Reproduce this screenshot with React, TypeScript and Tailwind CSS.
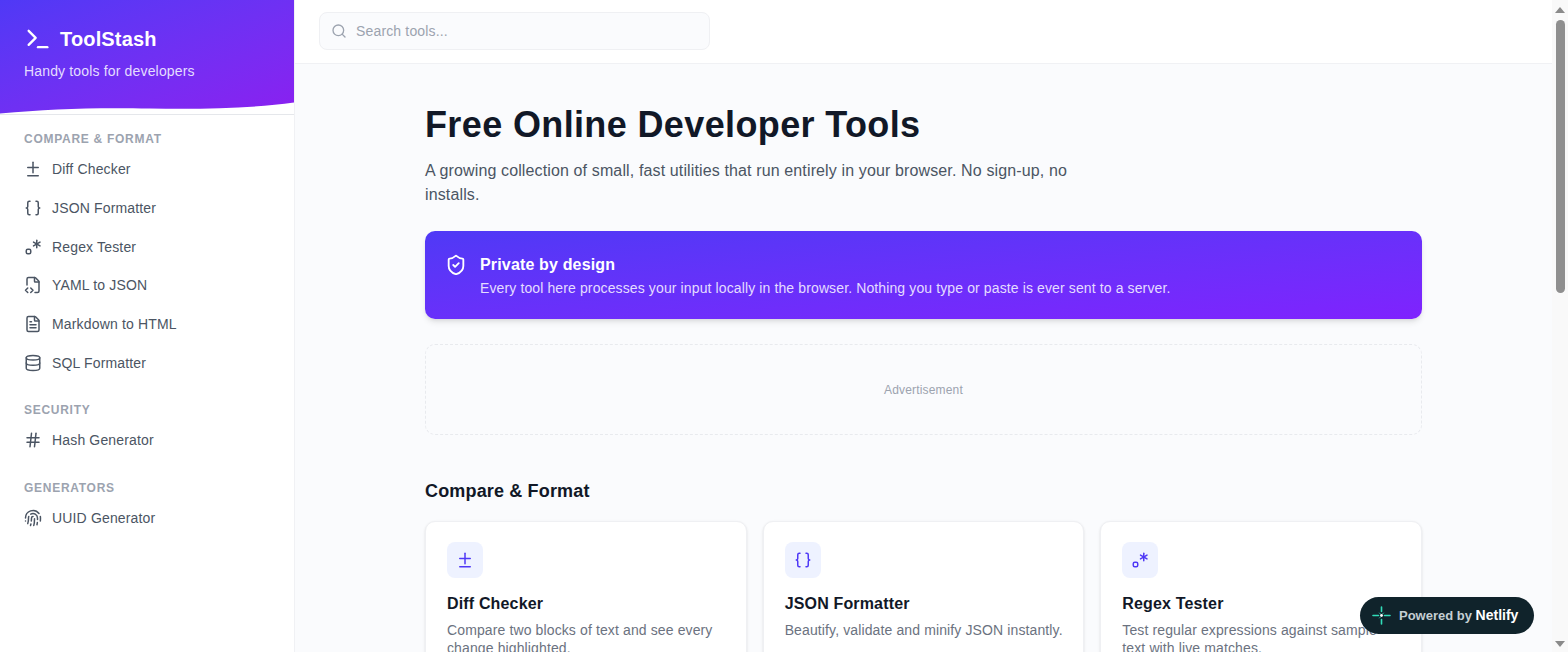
import { Braces, Database, Diff, FileCode2, FileText, Fingerprint, Hash, Regex, Search, ShieldCheck, Terminal } from "lucide-react";
import type { LucideIcon } from "lucide-react";

const font = "font-['Liberation_Sans',Arial,sans-serif]";

const sections: { title: string; items: { label: string; icon: LucideIcon }[] }[] = [
  {
    title: "Compare & Format",
    items: [
      { label: "Diff Checker", icon: Diff },
      { label: "JSON Formatter", icon: Braces },
      { label: "Regex Tester", icon: Regex },
      { label: "YAML to JSON", icon: FileCode2 },
      { label: "Markdown to HTML", icon: FileText },
      { label: "SQL Formatter", icon: Database },
    ],
  },
  { title: "Security", items: [{ label: "Hash Generator", icon: Hash }] },
  { title: "Generators", items: [{ label: "UUID Generator", icon: Fingerprint }] },
];

const cards = [
  { title: "Diff Checker", text: "Compare two blocks of text and see every change highlighted.", icon: Diff },
  { title: "JSON Formatter", text: "Beautify, validate and minify JSON instantly.", icon: Braces },
  { title: "Regex Tester", text: "Test regular expressions against sample text with live matches.", icon: Regex },
];

function Sidebar() {
  return (
    <aside className="w-[295px] shrink-0 h-full bg-white border-r border-[#f0f1f4]">
      <div className="relative h-[115px] border-b border-[#e5e7eb]">
        <div className="h-[114px] px-6 pt-[25px] bg-gradient-to-br from-[#4f39f6] to-[#8a1ff0] text-white">
          <div className="flex items-center gap-2 h-[28px]">
            <Terminal className="w-7 h-7" strokeWidth={2} />
            <span className="text-xl font-bold">ToolStash</span>
          </div>
          <p className="mt-[8px] text-sm leading-5 text-[#e4ddff]">Handy tools for developers</p>
        </div>
        <svg className="absolute left-0 bottom-0 w-full h-[12px]" viewBox="0 0 294 12" preserveAspectRatio="none">
          <path d="M0 11.5C50 7 90 5.5 150 6.5C205 7.5 255 6 294 0.5V12H0Z" fill="#fff" />
        </svg>
      </div>
      <nav className="pt-[16px]">
        {sections.map((s) => (
          <div key={s.title} className="mb-[20px]">
            <h3 className="h-[16px] px-6 text-xs leading-4 font-bold uppercase tracking-[0.72px] text-[#9ca3af]">{s.title}</h3>
            <ul className="mt-[3px]">
              {s.items.map((it) => (
                <li key={it.label} className="h-[38.7px] px-6 flex items-center gap-2.5 text-sm text-[#4b5563]">
                  <it.icon className="w-[18px] h-[18px]" strokeWidth={2} />
                  {it.label}
                </li>
              ))}
            </ul>
          </div>
        ))}
      </nav>
    </aside>
  );
}

function Scrollbar() {
  return (
    <div className="w-4 shrink-0 h-full bg-[#f9f9f9] flex flex-col items-center">
      <div className="h-[20px] flex items-center justify-center">
        <div className="w-0 h-0 border-x-[5px] border-x-transparent border-b-[6px] border-b-[#8a8a8a]" />
      </div>
      <div className="w-[9px] h-[273px] rounded-full bg-[#8f8f8f]" />
      <div className="flex-1" />
      <div className="h-[16px] flex items-center justify-center">
        <div className="w-0 h-0 border-x-[5px] border-x-transparent border-t-[6px] border-t-[#8a8a8a]" />
      </div>
    </div>
  );
}

export default function App() {
  return (
    <div className={`${font} relative flex h-[652px] overflow-hidden bg-[#fafbfd] tracking-[0.16px]`}>
      <Sidebar />
      <div className="flex-1 min-w-0 h-full overflow-hidden">
        <header className="h-[64px] bg-white border-b border-[#f0f1f4] px-6 flex items-center">
          <div className="w-[391px] h-[38px] -mt-[1px] rounded-lg border border-[#eff0f3] bg-[#fafbfd] pl-[12px] pr-3 flex items-center gap-2">
            <Search className="w-4 h-4 text-[#9ca3af] -ml-[1px] mr-[1px]" strokeWidth={2} />
            <span className="text-sm text-[#9ca3af]">Search tools...</span>
          </div>
        </header>
        <main className="w-[997px] mx-auto pt-[37px]">
          <h1 className="text-4xl leading-[48px] font-bold tracking-[0.37px] text-[#111827]">Free Online Developer Tools</h1>
          <p className="mt-[10px] max-w-[672px] text-base leading-6 tracking-[0.13px] text-[#4b5563]">
            A growing collection of small, fast utilities that run entirely in your browser. No sign-up, no installs.
          </p>
          <div className="mt-[24px] h-[88px] rounded-[10px] px-5 flex items-start gap-[13px] pt-[23px] bg-gradient-to-br from-[#4f39f6] to-[#7f22fe] shadow-md text-white">
            <ShieldCheck className="w-[22px] h-[22px] shrink-0" strokeWidth={2} />
            <div>
              <p className="text-base leading-[22px] font-bold">Private by design</p>
              <p className="mt-[2px] text-sm leading-5 tracking-[0.12px] text-[#e4ddff]">
                Every tool here processes your input locally in the browser. Nothing you type or paste is ever sent to a server.
              </p>
            </div>
          </div>
          <div className="mt-[25px] h-[91px] rounded-[10px] border border-dashed border-[#e8eaee] bg-[#fafbfd] flex items-center justify-center text-xs text-[#9ca3af]">
            Advertisement
          </div>
          <h2 className="mt-[44px] text-lg leading-[24px] font-bold text-[#111827]">Compare &amp; Format</h2>
          <div className="mt-[18px] grid grid-cols-3 gap-4">
            {cards.map((c) => (
              <div key={c.title} className="h-[160px] rounded-[10px] border border-[#eff0f3] bg-white shadow-sm pl-[21px] pr-[18px] pt-[20px]">
                <div className="w-[36px] h-[36px] rounded-lg bg-[#eef2ff] flex items-center justify-center text-[#4f39f6]">
                  <c.icon className="w-[18px] h-[18px]" strokeWidth={2} />
                </div>
                <h3 className="mt-[14px] text-base leading-[24px] font-bold text-[#111827]">{c.title}</h3>
                <p className="mt-[5px] text-sm leading-[18px] tracking-[0.12px] text-[#6b7280]">{c.text}</p>
              </div>
            ))}
          </div>
        </main>
      </div>
      <Scrollbar />
      <div className="absolute left-[1360px] top-[597px] w-[174px] h-[37px] rounded-full bg-[#10232b] flex items-center pl-[12px] gap-[8px] text-[13px] tracking-normal">
        <svg width="19" height="19" viewBox="0 0 19 19" fill="none" strokeLinecap="round">
          <path d="M1 9.5H6.5M12.5 9.5H18M9.5 1V5.5M9.5 13.5V18" stroke="#30dcb8" strokeWidth="1.6" />
          <path d="M7.5 7L8.3 7.8M11.5 7L10.7 7.8M7.5 12L8.3 11.2" stroke="#30dcb8" strokeWidth="0.9" />
          <circle cx="9.5" cy="9.5" r="1.4" fill="#fff" />
        </svg>
        <span className="text-[#c4ced3] font-bold whitespace-nowrap">
          Powered by <span className="text-white text-sm">Netlify</span>
        </span>
      </div>
    </div>
  );
}
